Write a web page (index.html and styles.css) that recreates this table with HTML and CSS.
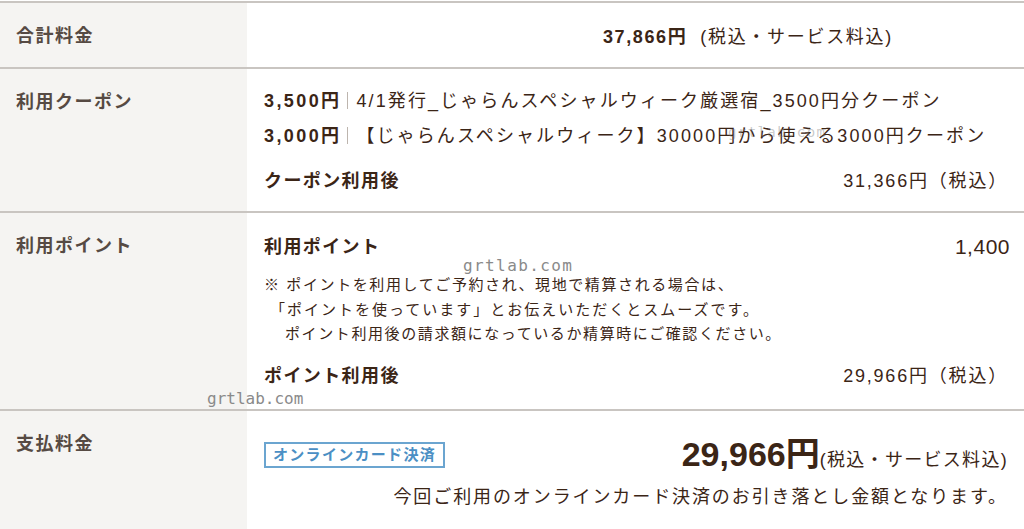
FILE: index.html
```html
<!DOCTYPE html>
<html lang="ja">
<head>
  <meta charset="UTF-8">
  <title>料金明細</title>
  <link rel="stylesheet" href="styles.css">
</head>
<body>

<div class="table">

  <div class="row row-total">
    <div class="label">合計料金</div>
    <div class="cell total">
      <strong>37,866円</strong><span class="tax">(税込・サービス料込)</span>
    </div>
  </div>

  <div class="row row-coupon">
    <div class="label">利用クーポン</div>
    <div class="cell">
      <div class="coupon"><strong>3,500円</strong><i class="sep"></i>4/1発行_じゃらんスペシャルウィーク厳選宿_3500円分クーポン</div>
      <div class="coupon"><strong>3,000円</strong><i class="sep"></i>【じゃらんスペシャルウィーク】30000円から使える3000円クーポン</div>
      <div class="line after">
        <strong>クーポン利用後</strong>
        <span>31,366円（税込）</span>
      </div>
      <span class="mark mark-faint">grtlab.com</span>
    </div>
  </div>

  <div class="row row-point">
    <div class="label">利用ポイント</div>
    <div class="cell">
      <div class="line head">
        <strong>利用ポイント</strong>
        <span class="num">1,400</span>
      </div>
      <div class="note">
        <p>※ ポイントを利用してご予約され、現地で精算される場合は、</p>
        <p class="in1">「ポイントを使っています」とお伝えいただくとスムーズです。</p>
        <p class="in2">ポイント利用後の請求額になっているか精算時にご確認ください。</p>
      </div>
      <div class="line after2">
        <strong>ポイント利用後</strong>
        <span>29,966円（税込）</span>
      </div>
      <span class="mark mark-a">grtlab.com</span>
    </div>
    <span class="mark mark-b">grtlab.com</span>
  </div>

  <div class="row row-pay">
    <div class="label">支払料金</div>
    <div class="cell">
      <div class="pay">
        <span class="badge">オンラインカード決済</span>
        <div class="price"><strong>29,966円</strong><span>(税込・サービス料込)</span></div>
      </div>
      <p class="pay-note">今回ご利用のオンラインカード決済のお引き落とし金額となります。</p>
    </div>
  </div>

</div>

</body>
</html>
```

FILE: styles.css
```css
body { margin: 0; background: #fff; font-family: "Liberation Sans", "Noto Sans CJK JP", sans-serif; color: #3b2516; }
p { margin: 0; }

.table { border-top: 2px solid #c9c5c1; margin-top: 1px; }
.row { display: flex; border-bottom: 2px solid #c9c5c1; position: relative; }
.label { width: 247px; flex: none; background: #f5f4f2; color: #564a43; font-size: 18px; font-weight: bold; line-height: 24px; letter-spacing: 1.5px; padding: 21px 0 0 16px; box-sizing: border-box; }
.cell { flex: 1; position: relative; padding: 0 16px 0 17px; font-size: 18px; letter-spacing: 1.4px; }

.row-total { height: 64px; }
.total { display: flex; align-items: center; padding-left: 356px; }
.total strong { letter-spacing: 1.6px; }
.total .tax { margin-left: 13px; letter-spacing: 1.7px; }

.row-coupon { height: 142px; }
.coupon { line-height: 24px; letter-spacing: 2.1px; }
.coupon:first-child { margin-top: 20px; }
.coupon + .coupon { margin-top: 11px; }
.coupon strong { letter-spacing: 2.4px; }
.sep { display: inline-block; width: 1px; height: 17px; background: #bdb5ae; margin: 0 8px 0 6px; vertical-align: -2px; }
.line { display: flex; justify-content: space-between; align-items: center; line-height: 24px; }
.line span { letter-spacing: 1.8px; }
.after { margin-top: 21px; }

.row-point { height: 196px; }
.head { margin-top: 22px; }
.head .num { font-size: 21px; letter-spacing: 0.5px; margin-right: -2px; }
.note { margin-top: 14px; font-size: 15px; line-height: 24.5px; letter-spacing: 1.6px; }
.note .in1 { padding-left: 6px; letter-spacing: 2px; }
.note .in2 { padding-left: 21px; }
.after2 { margin-top: 17px; }

.mark { position: absolute; font-family: "DejaVu Sans Mono", monospace; font-size: 16px; line-height: 18px; color: #8a8a8a; }
.mark-faint { left: 481px; top: 54px; color: rgba(120, 120, 120, 0.4); font-size: 14px; }
.mark-a { left: 216px; top: 44px; }
.mark-b { left: 207px; top: 177px; }

.row-pay { height: 119px; border-bottom: none; }
.pay { display: flex; justify-content: space-between; align-items: flex-end; margin-top: 21px; }
.badge { border: 2px solid #6ba5d0; color: #4b8fc4; font-size: 15px; font-weight: bold; padding: 0 7px; line-height: 22px; letter-spacing: 1.3px; margin-bottom: 8px; }
.price { letter-spacing: 0; }
.price strong { font-size: 34px; line-height: 44px; }
.price span { font-size: 18px; letter-spacing: 1.3px; }
.pay-note { text-align: right; margin-top: 9px; line-height: 24px; letter-spacing: 1.9px; }
```
